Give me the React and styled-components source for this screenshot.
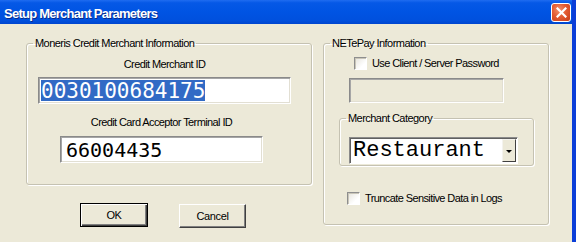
import styled, { createGlobalStyle } from 'styled-components';

const GlobalStyle = createGlobalStyle`
  html, body {
    margin: 0;
    padding: 0;
    background: #ece9d8;
  }
  body {
    width: 576px;
    height: 242px;
    overflow: hidden;
    font-family: "Liberation Sans", Arial, sans-serif;
  }
`;

const Window = styled.div`
  width: 576px;
  height: 242px;
  box-sizing: border-box;
  display: flex;
  flex-direction: column;
  background: #ece9d8;
  border-right: 4px solid #0b3ed8;
`;

const TitleBar = styled.div`
  height: 24px;
  flex: none;
  display: flex;
  align-items: center;
  justify-content: space-between;
  padding: 0 0 0 4px;
  background: linear-gradient(to bottom, #1f6cf0 0%, #0558e6 12%, #0054e3 50%, #0050dd 85%, #0046cf 100%);
`;

const Title = styled.span`
  color: #fff;
  font-weight: bold;
  font-size: 13px;
  letter-spacing: -0.75px;
  text-shadow: 1px 1px 0 #0a2c8a;
  padding-top: 2px;
`;

const CloseButton = styled.div`
  width: 20px;
  height: 19px;
  box-sizing: border-box;
  margin-right: 1px;
  border: 1px solid #fff;
  border-radius: 3px;
  background: radial-gradient(circle at 40% 35%, #f3926e 0%, #e35b32 45%, #c73c15 100%);
  display: flex;
  align-items: center;
  justify-content: center;
`;

const Body = styled.div`
  flex: 1;
  display: flex;
  gap: 11px;
  padding: 13px 0 0 26px;
`;

const Column = styled.div`
  display: flex;
  flex-direction: column;
`;

const Group = styled.fieldset`
  margin: ${(p) => p.$margin || '0'};
  padding: 0;
  width: ${(p) => p.$w}px;
  height: ${(p) => p.$h}px;
  box-sizing: border-box;
  border: 1px solid #c5c2b2;
  border-radius: 3px;
  box-shadow: 1px 1px 0 #fff, inset 1px 1px 0 #fff;
  display: flex;
  flex-direction: column;
  align-items: flex-start;
`;

const Legend = styled.legend`
  margin-left: 6px;
  padding: 0 2px;
  font-size: 11px;
  line-height: 13px;
  letter-spacing: -0.55px;
  color: #000;
`;

const Inner = styled.div`
  align-self: stretch;
  display: flex;
  flex-direction: column;
  align-items: center;
  padding: 0 20px 0 11px;
`;

const Label = styled.div`
  font-size: 11px;
  line-height: 13px;
  letter-spacing: -0.6px;
  color: #000;
  margin-top: ${(p) => p.$top || 0}px;
`;

const Stack = styled.div`
  display: flex;
  flex-direction: column;
  align-items: center;
  margin-right: ${(p) => p.$shift || 0}px;
`;

const EditBox = styled.div`
  width: ${(p) => p.$w}px;
  height: ${(p) => p.$h}px;
  box-sizing: border-box;
  margin-top: ${(p) => p.$top || 0}px;
  margin-left: ${(p) => p.$indent || 0}px;
  border: 1px solid;
  border-color: #8a8a8a #fff #fff #8a8a8a;
  box-shadow: inset 1px 1px 0 #a6a6a6, inset -1px -1px 0 #e2dfd3;
  background: ${(p) => (p.$disabled ? '#ece9d8' : '#fff')};
  display: flex;
  align-items: center;
  padding: 2px;
  font-family: "DejaVu Sans Mono", "Liberation Mono", monospace;
  font-size: ${(p) => p.$size || 20}px;
  color: #000;
  overflow: hidden;
  white-space: pre;
`;

const Selected = styled.span`
  background: #316ac5;
  color: #fff;
  align-self: stretch;
  display: flex;
  align-items: center;
`;

const Plain = styled.span`
  padding-left: 3px;
`;

const CheckRow = styled.div`
  display: flex;
  align-items: center;
  gap: 5px;
  margin-top: ${(p) => p.$top || 0}px;
  margin-left: ${(p) => p.$indent || 0}px;
`;

const CheckBox = styled.span`
  width: 13px;
  height: 13px;
  box-sizing: border-box;
  border: 1px solid;
  border-color: #8e8e8e #fff #fff #8e8e8e;
  box-shadow: inset 1px 1px 0 #c9c6b9;
  background: linear-gradient(135deg, #e6e4dc 0%, #fff 70%);
`;

const Combo = styled.div`
  width: 169px;
  height: 27px;
  box-sizing: border-box;
  margin-top: ${(p) => p.$top || 0}px;
  margin-left: ${(p) => p.$indent || 0}px;
  border: 1px solid;
  border-color: #8a8a8a #fff #fff #8a8a8a;
  box-shadow: inset 1px 1px 0 #606060;
  background: #fff;
  display: flex;
  align-items: stretch;
`;

const ComboText = styled.div`
  flex: 1;
  padding-left: 3px;
  display: flex;
  align-items: center;
  font-family: "Liberation Mono", "Courier New", monospace;
  font-size: 22px;
  color: #000;
`;

const DropButton = styled.div`
  width: 14px;
  margin: 1px 1px 1px 0;
  box-sizing: border-box;
  border: 1px solid;
  border-color: #f4f3ee #404040 #404040 #f4f3ee;
  background: #ece9d8;
  display: flex;
  align-items: center;
  justify-content: center;
`;

const Arrow = styled.span`
  width: 0;
  height: 0;
  border-left: 3px solid transparent;
  border-right: 3px solid transparent;
  border-top: 3px solid #000;
  margin-top: 2px;
`;

const ButtonRow = styled.div`
  display: flex;
  gap: 31px;
  margin: 18px 0 0 54px;
`;

const Button = styled.div`
  width: ${(p) => (p.$default ? 68 : 67)}px;
  height: 24px;
  box-sizing: border-box;
  margin-top: ${(p) => (p.$default ? 0 : 1)}px;
  border: 1px solid;
  border-color: ${(p) => (p.$default ? '#000' : '#fff #404040 #404040 #fff')};
  box-shadow: ${(p) =>
    p.$default
      ? 'inset 1px 1px 0 #fff, inset -1px -1px 0 #404040, inset -2px -2px 0 #808080'
      : 'inset -1px -1px 0 #808080'};
  background: #ece9d8;
  display: flex;
  align-items: center;
  justify-content: center;
  font-size: 11px;
  letter-spacing: -0.4px;
  color: #000;
`;

export default function App() {
  return (
    <>
      <GlobalStyle />
      <Window>
        <TitleBar>
          <Title>Setup Merchant Parameters</Title>
          <CloseButton>
            <svg width="11" height="11" viewBox="0 0 11 11">
              <path d="M1.5 1.5 L9.5 9.5 M9.5 1.5 L1.5 9.5" stroke="#fff" strokeWidth="2.2" strokeLinecap="square" />
            </svg>
          </CloseButton>
        </TitleBar>
        <Body>
          <Column>
            <Group $w={286} $h={148}>
              <Legend>Moneris Credit Merchant Information</Legend>
              <Inner>
                <Label $top={8}>Credit Merchant ID</Label>
                <EditBox $w={253} $h={27} $top={6} $size={21}>
                  <Selected>0030100684175</Selected>
                </EditBox>
                <Stack $shift={6}>
                  <Label $top={12}>Credit Card Acceptor Terminal ID</Label>
                  <EditBox $w={203} $h={27} $top={7}>
                    <Plain>66004435</Plain>
                  </EditBox>
                </Stack>
              </Inner>
            </Group>
            <ButtonRow>
              <Button $default>OK</Button>
              <Button>Cancel</Button>
            </ButtonRow>
          </Column>
          <Group $w={226} $h={188}>
            <Legend>NETePay Information</Legend>
            <CheckRow $top={7} $indent={30}>
              <CheckBox />
              <Label>Use Client / Server Password</Label>
            </CheckRow>
            <EditBox $w={155} $h={25} $top={8} $indent={25} $disabled />
            <Group $w={195} $h={54} $margin="9px 0 0 15px">
              <Legend>Merchant Category</Legend>
              <Combo $top={12} $indent={9}>
                <ComboText>Restaurant</ComboText>
                <DropButton>
                  <Arrow />
                </DropButton>
              </Combo>
            </Group>
            <CheckRow $top={26} $indent={23}>
              <CheckBox />
              <Label>Truncate Sensitive Data in Logs</Label>
            </CheckRow>
          </Group>
        </Body>
      </Window>
    </>
  );
}
